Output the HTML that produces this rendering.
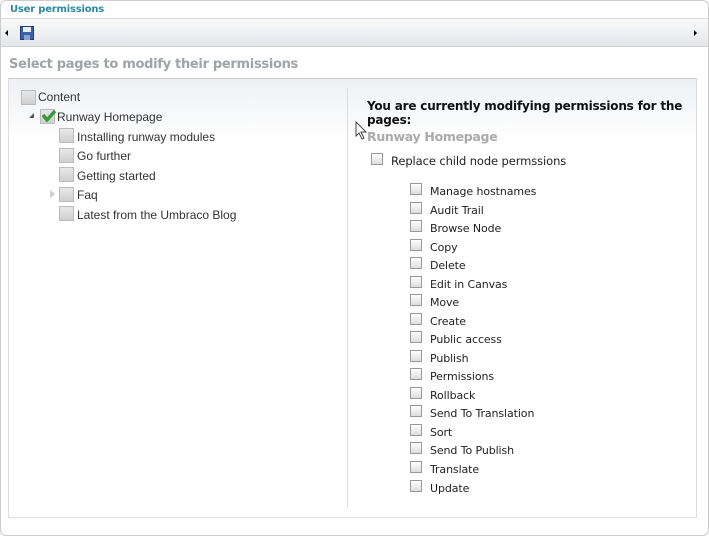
<!DOCTYPE html>
<html><head><style>
*{margin:0;padding:0;box-sizing:border-box}
body{width:709px;height:536px;background:#fff;position:relative;overflow:hidden;font-family:"DejaVu Sans","Liberation Sans",sans-serif}
.a{position:absolute;white-space:nowrap}
.outer{position:absolute;left:0;top:0;width:709px;height:536px;border:1px solid #ccc;border-radius:6px}
.tb{left:1px;top:18px;width:707px;height:29px;background:linear-gradient(#fafafa,#e4e6e9);border-top:1px solid #dadada;border-bottom:1px solid #d2d2d2}
.cb{position:absolute;width:15px;height:15px;border:1px solid #bbb;background:linear-gradient(#e8e8e8,#d0d0d0)}
.cb2{position:absolute;width:12px;height:12px;border:1px solid #999;background:linear-gradient(#fff,#ddd)}
.lt{font-family:"Liberation Sans",sans-serif;font-size:12px;color:#333}
.rt{font-size:11px;color:#222;letter-spacing:-0.1px}
</style></head><body>
<div class="outer"></div>
<div class="a" style="left:10px;top:4px;font-size:10px;color:#2a8aa0;font-weight:bold;letter-spacing:-0.2px">User permissions</div>
<div class="a tb"></div>
<div class="a" style="left:5px;top:30px;width:0;height:0;border-top:3px solid transparent;border-bottom:3px solid transparent;border-right:3px solid #000"></div>
<div class="a" style="left:694px;top:30px;width:0;height:0;border-top:3px solid transparent;border-bottom:3px solid transparent;border-left:3px solid #000"></div>
<div class="a" style="left:20px;top:26px;width:14px;height:14px;background:#3b5fa8;border:1px solid #233d7a"><div style="position:absolute;left:2px;top:0;width:8px;height:5px;background:#e8eef8"></div><div style="position:absolute;left:3px;top:8px;width:6px;height:5px;background:#8aa0c8"></div></div>
<div class="a" style="left:9px;top:57px;font-size:13px;font-weight:bold;color:#a0a4a8;letter-spacing:-0.3px">Select pages to modify their permissions</div>
<div class="a" style="left:8px;top:78px;width:689px;height:440px;border:1px solid #ddd;border-top:1px solid #ccc;background:linear-gradient(#eef0f3,#fff 60px)"></div>
<div class="a" style="left:347px;top:88px;width:1px;height:420px;background:#ddd"></div>
<div class="cb" style="left:21px;top:90px"></div><div class="a lt" style="left:38px;top:90px">Content</div>
<div class="a" style="left:29px;top:113px;width:0;height:0;border-left:5px solid transparent;border-bottom:5px solid #555"></div>
<div class="cb" style="left:40px;top:109px"><svg width="15" height="13" style="position:absolute;left:0;top:-1px"><path d="M2 6 L6 11 L14 2" stroke="#3a9a3a" stroke-width="3.5" fill="none"/></svg></div>
<div class="a lt" style="left:57px;top:110px">Runway Homepage</div>
<div class="cb" style="left:59px;top:128px"></div><div class="a lt" style="left:77px;top:130px">Installing runway modules</div>
<div class="cb" style="left:59px;top:148px"></div><div class="a lt" style="left:77px;top:149px">Go further</div>
<div class="cb" style="left:59px;top:167px"></div><div class="a lt" style="left:77px;top:169px">Getting started</div>
<div class="a" style="left:50px;top:190px;width:0;height:0;border-top:4px solid transparent;border-bottom:4px solid transparent;border-left:5px solid #ccc"></div>
<div class="cb" style="left:59px;top:187px"></div><div class="a lt" style="left:77px;top:188px">Faq</div>
<div class="cb" style="left:59px;top:206px"></div><div class="a lt" style="left:77px;top:208px">Latest from the Umbraco Blog</div>
<div class="a" style="left:367px;top:99px;font-size:12px;font-weight:bold;color:#111;line-height:14px;letter-spacing:-0.2px">You are currently modifying permissions for the<br>pages:</div>
<div class="a" style="left:367px;top:129px;font-size:12.5px;font-weight:bold;color:#aaa;letter-spacing:-0.3px">Runway Homepage</div>
<div class="cb2" style="left:371px;top:153px"></div><div class="a rt" style="left:391px;top:154px;font-size:11.5px">Replace child node permssions</div>
<div class="cb2" style="left:410px;top:183px"></div><div class="a rt" style="left:430px;top:185px">Manage hostnames</div>
<div class="cb2" style="left:410px;top:202px"></div><div class="a rt" style="left:430px;top:204px">Audit Trail</div>
<div class="cb2" style="left:410px;top:220px"></div><div class="a rt" style="left:430px;top:222px">Browse Node</div>
<div class="cb2" style="left:410px;top:239px"></div><div class="a rt" style="left:430px;top:241px">Copy</div>
<div class="cb2" style="left:410px;top:257px"></div><div class="a rt" style="left:430px;top:259px">Delete</div>
<div class="cb2" style="left:410px;top:276px"></div><div class="a rt" style="left:430px;top:278px">Edit in Canvas</div>
<div class="cb2" style="left:410px;top:294px"></div><div class="a rt" style="left:430px;top:296px">Move</div>
<div class="cb2" style="left:410px;top:313px"></div><div class="a rt" style="left:430px;top:315px">Create</div>
<div class="cb2" style="left:410px;top:331px"></div><div class="a rt" style="left:430px;top:333px">Public access</div>
<div class="cb2" style="left:410px;top:350px"></div><div class="a rt" style="left:430px;top:352px">Publish</div>
<div class="cb2" style="left:410px;top:368px"></div><div class="a rt" style="left:430px;top:370px">Permissions</div>
<div class="cb2" style="left:410px;top:387px"></div><div class="a rt" style="left:430px;top:389px">Rollback</div>
<div class="cb2" style="left:410px;top:405px"></div><div class="a rt" style="left:430px;top:407px">Send To Translation</div>
<div class="cb2" style="left:410px;top:424px"></div><div class="a rt" style="left:430px;top:426px">Sort</div>
<div class="cb2" style="left:410px;top:442px"></div><div class="a rt" style="left:430px;top:444px">Send To Publish</div>
<div class="cb2" style="left:410px;top:461px"></div><div class="a rt" style="left:430px;top:463px">Translate</div>
<div class="cb2" style="left:410px;top:480px"></div><div class="a rt" style="left:430px;top:482px">Update</div>
<svg class="a" style="left:355px;top:121px" width="14" height="20"><path d="M1 1 L1 15 L4 12 L7 18 L9 17 L6 11 L11 11 Z" fill="#fff" stroke="#444" stroke-width="1"/></svg>
</body></html>
